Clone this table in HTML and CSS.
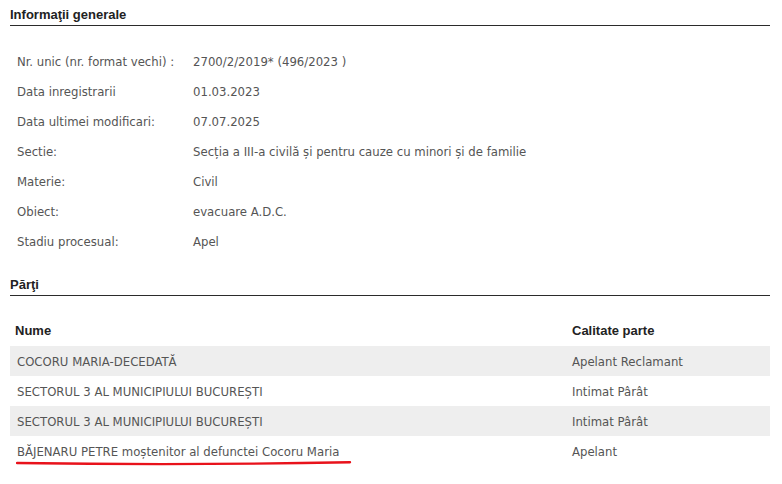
FILE: index.html
```html
<!DOCTYPE html>
<html lang="ro">
<head>
<meta charset="utf-8">
<link rel="stylesheet" href="styles.css">
</head>
<body>
<div class="page">
  <h2 class="section-title">Informaţii generale</h2>
  <div class="info">
    <div class="info-row"><span class="label">Nr. unic (nr. format vechi) :</span><span class="value">2700/2/2019* (496/2023 )</span></div>
    <div class="info-row"><span class="label">Data inregistrarii</span><span class="value">01.03.2023</span></div>
    <div class="info-row"><span class="label">Data ultimei modificari:</span><span class="value">07.07.2025</span></div>
    <div class="info-row"><span class="label">Sectie:</span><span class="value">Secția a III-a civilă și pentru cauze cu minori și de familie</span></div>
    <div class="info-row"><span class="label">Materie:</span><span class="value">Civil</span></div>
    <div class="info-row"><span class="label">Obiect:</span><span class="value">evacuare A.D.C.</span></div>
    <div class="info-row"><span class="label">Stadiu procesual:</span><span class="value">Apel</span></div>
  </div>
  <h2 class="section-title parti">Părţi</h2>
  <div class="parties">
    <div class="p-head"><span class="c-name">Nume</span><span class="c-role">Calitate parte</span></div>
    <div class="p-row alt"><span class="c-name">COCORU MARIA-DECEDATĂ</span><span class="c-role">Apelant Reclamant</span></div>
    <div class="p-row"><span class="c-name">SECTORUL 3 AL MUNICIPIULUI BUCUREȘTI</span><span class="c-role">Intimat Pârât</span></div>
    <div class="p-row alt"><span class="c-name">SECTORUL 3 AL MUNICIPIULUI BUCUREȘTI</span><span class="c-role">Intimat Pârât</span></div>
    <div class="p-row marked"><span class="c-name">BĂJENARU PETRE moștenitor al defunctei Cocoru Maria</span><span class="c-role">Apelant</span>
      <svg class="underline" width="340" height="8" viewBox="0 0 340 8"><path d="M1 4 Q170 6.5 334 3.2" fill="none" stroke="#e8121b" stroke-width="2.4" stroke-linecap="round"/></svg>
    </div>
  </div>
</div>
</body>
</html>
```

FILE: styles.css
```css
* { box-sizing: border-box; }
body {
  margin: 0;
  background: #fff;
  font-family: "DejaVu Sans Condensed", "DejaVu Sans", sans-serif;
  font-size: 13px;
  color: #555;
}
.page {
  width: 770px;
  padding: 0 0 0 10px;
}
.section-title {
  margin: 0;
  font-family: "Liberation Sans", Arial, sans-serif;
  font-size: 13px;
  font-weight: bold;
  color: #222;
  padding: 7px 0 3px 0;
  line-height: 15px;
  border-bottom: 1px solid #2b2b2b;
}
.info {
  padding: 20px 0 14px 0;
}
.info-row {
  display: flex;
  height: 30px;
  align-items: center;
  padding-left: 7px;
}
.label { width: 176px; }
.parties {
  padding-top: 19px;
}
.p-head, .p-row {
  display: flex;
  height: 30px;
  align-items: center;
  padding-left: 5px;
}
.p-head {
  height: 31px;
  padding-bottom: 1px;
  font-family: "Liberation Sans", Arial, sans-serif;
  font-weight: bold;
  color: #222;
}
.p-row { padding-left: 7px; }
.p-row .c-name { width: 555px; }
.p-head .c-name { width: 557px; }
.alt { background: #eeeeee; }
.marked { position: relative; }
.underline {
  position: absolute;
  left: 6px;
  top: 23px;
}
```
